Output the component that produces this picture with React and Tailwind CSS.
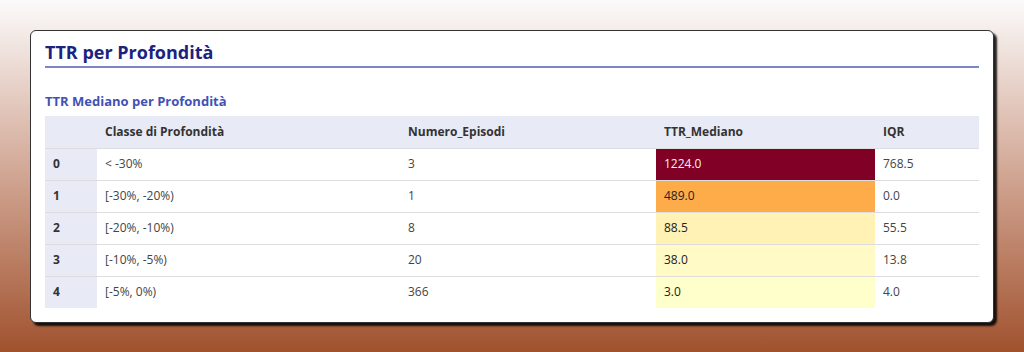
import React from 'react'

const rows = [
  { idx: 0, classe: '< -30%', num: 3, ttr: '1224.0', iqr: '768.5', bg: 'bg-[#800026]', fg: 'text-[#f4f4f4]' },
  { idx: 1, classe: '[-30%, -20%)', num: 1, ttr: '489.0', iqr: '0.0', bg: 'bg-[#feab4a]', fg: 'text-[#222]' },
  { idx: 2, classe: '[-20%, -10%)', num: 8, ttr: '88.5', iqr: '55.5', bg: 'bg-[#fff2b4]', fg: 'text-[#222]' },
  { idx: 3, classe: '[-10%, -5%)', num: 20, ttr: '38.0', iqr: '13.8', bg: 'bg-[#fffac6]', fg: 'text-[#222]' },
  { idx: 4, classe: '[-5%, 0%)', num: 366, ttr: '3.0', iqr: '4.0', bg: 'bg-[#ffffcc]', fg: 'text-[#222]' },
]

export default function App() {
  return (
    <div className="min-h-[352px] px-[30px] pt-[30px] pb-[29px] bg-gradient-to-b from-[#fbfbfb] to-[#a0522d] font-['Open_Sans','Noto_Sans',sans-serif]">
      <div className="bg-white border border-[#333] rounded-md shadow-[3px_3px_2px_rgba(0,0,0,0.85)] px-[14px] pt-[9px] pb-[14px]">
        <h2 className="text-[18px] leading-[24px] font-bold text-[#1a237e] pb-[2px] border-b-2 border-[#7986cb]">
          TTR per Profondità
        </h2>
        <h3 className="mt-[23px] mb-[5px] text-[13px] leading-[20px] font-bold text-[#3f51b5]">
          TTR Mediano per Profondità
        </h3>
        <table className="w-full table-fixed border-collapse text-[12px] text-[#444]">
          <colgroup>
            <col className="w-[52px]" />
            <col className="w-[303px]" />
            <col className="w-[256px]" />
            <col className="w-[219px]" />
            <col />
          </colgroup>
          <thead>
            <tr className="bg-[#e8eaf6] h-[32px] border-b border-[#ddd]">
              <th></th>
              <th className="text-left font-bold text-[#333] px-[8px]">Classe di Profondità</th>
              <th className="text-left font-bold text-[#333] px-[8px]">Numero_Episodi</th>
              <th className="text-left font-bold text-[#333] px-[8px]">TTR_Mediano</th>
              <th className="text-left font-bold text-[#333] px-[8px]">IQR</th>
            </tr>
          </thead>
          <tbody>
            {rows.map((r, n) => (
              <tr key={r.idx} className={'h-[32px] ' + (n < rows.length - 1 ? 'border-b border-[#ddd]' : '')}>
                <th className="bg-[#e8eaf6] text-left font-bold text-[#333] px-[8px]">{r.idx}</th>
                <td className="px-[8px]">{r.classe}</td>
                <td className="px-[8px]">{r.num}</td>
                <td className={'px-[8px] ' + r.bg + ' ' + r.fg}>{r.ttr}</td>
                <td className="px-[8px]">{r.iqr}</td>
              </tr>
            ))}
          </tbody>
        </table>
      </div>
    </div>
  )
}
